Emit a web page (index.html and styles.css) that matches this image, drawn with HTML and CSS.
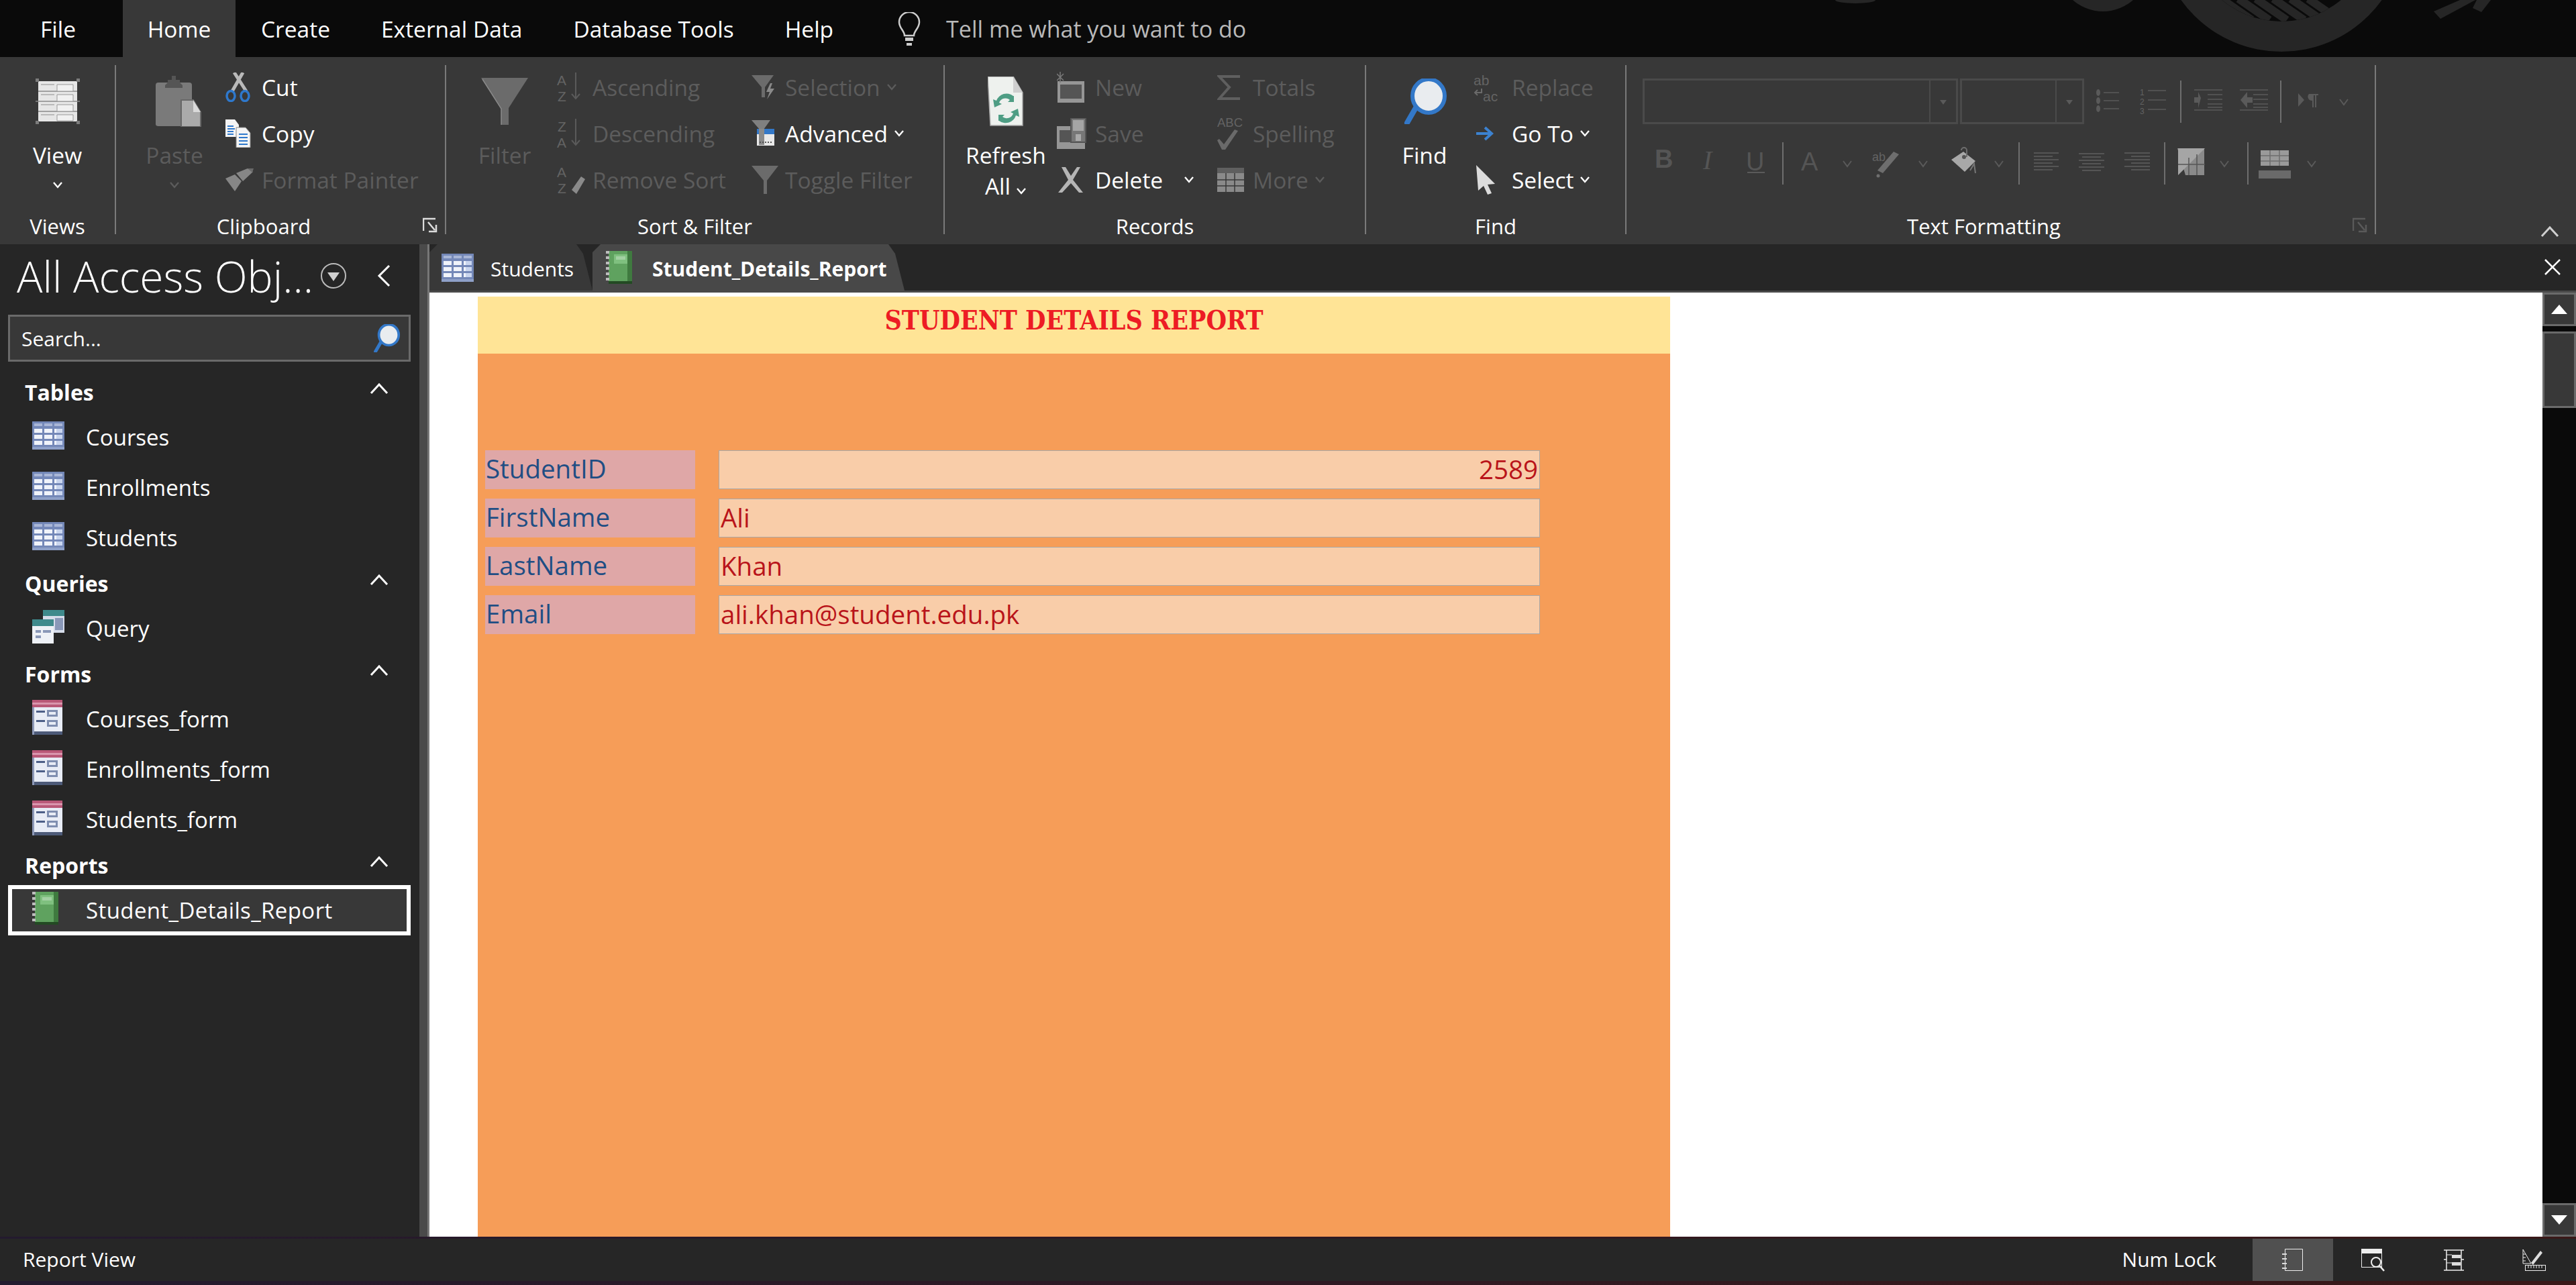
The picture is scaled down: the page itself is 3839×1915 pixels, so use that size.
FILE: index.html
```html
<!DOCTYPE html>
<html lang="en">
<head>
  <meta charset="UTF-8">
  <title>Student_Details_Report</title>
  <link rel="stylesheet" href="styles.css">
</head>
<body>
  <svg class="defs" width="0" height="0">
    <symbol id="chev" viewBox="0 0 16 11"><path d="M2 2l6 7 6-7" fill="none" stroke="currentColor" stroke-width="2.4"/></symbol>
    <symbol id="up" viewBox="0 0 28 18"><path d="M2 16L14 3l12 13" fill="none" stroke="currentColor" stroke-width="3"/></symbol>
    <symbol id="tbl" viewBox="0 0 48 42">
      <rect width="48" height="42" fill="#7488b8"/><rect y="38" width="48" height="4" fill="#8ea0c8"/>
      <path d="M3 3h12v4H3zM18 3h12v4H18zM33 3h12v4H33z" fill="#a9b6d6"/>
      <path d="M3 11h12v6H3zM18 11h12v6H18zM33 11h12v6H33zM3 20h12v6H3zM18 20h12v6H18zM33 20h12v6H33zM3 29h12v6H3zM18 29h12v6H18zM33 29h12v6H33z" fill="#f0f3fa"/>
      <path d="M36 11h9v6h-9zM36 20h9v6h-9zM36 29h9v6h-9z" fill="#c9d5ee"/>
    </symbol>
    <symbol id="frm" viewBox="0 0 45 52" preserveAspectRatio="xMinYMid">
      <rect width="45" height="52" fill="#e8ecf6"/><rect width="45" height="11" fill="#b95878"/><rect y="4" width="45" height="3" fill="#d995ad"/>
      <rect y="47" width="45" height="5" fill="#4d5a78"/><rect width="3" height="52" y="11" fill="#8d99b8"/>
      <path d="M6 16h13v3H6zM6 30h13v3H6z" fill="#4d5f88"/>
      <rect x="22" y="15" width="16" height="10" fill="#7f8eb0"/><rect x="25" y="18" width="10" height="4" fill="#e8ecf6"/>
      <rect x="22" y="30" width="16" height="10" fill="#7f8eb0"/><rect x="25" y="33" width="10" height="4" fill="#e8ecf6"/>
    </symbol>
    <symbol id="rpt" viewBox="0 0 39 49" preserveAspectRatio="xMinYMid">
      <rect x="4" width="35" height="49" fill="#5fa25f"/><rect x="32" width="7" height="49" fill="#3f7a3f"/><rect x="4" y="45" width="35" height="4" fill="#234a23"/>
      <rect x="12" y="5" width="20" height="14" fill="#7fc07f"/><rect x="15" y="8" width="14" height="5" fill="#a3d0a3"/>
      <path d="M0 0h5v4H0zM0 8h5v4H0zM0 16h5v4H0zM0 24h5v4H0zM0 32h5v4H0zM0 40h5v4H0z" fill="#bdbdbd"/>
    </symbol>
    <symbol id="mag" viewBox="0 0 65 68">
      <path d="M6 66L21 40" stroke="#3378c8" stroke-width="8" stroke-linecap="round"/>
      <ellipse cx="38" cy="26" rx="24" ry="25" fill="#e9ecef" stroke="#3378c8" stroke-width="6"/>
    </symbol>
  </svg>

  <header class="titlebar">
    <svg class="ornament" width="3839" height="85" viewBox="0 0 3839 85">
      <defs><clipPath id="hole"><circle cx="3400" cy="-107" r="139"/></clipPath></defs>
      <path d="M3216 -107a184 184 0 1 0 368 0a184 184 0 1 0 -368 0zM3261 -107a139 139 0 1 1 278 0a139 139 0 1 1 -278 0z" fill="#262626" fill-rule="evenodd"/>
      <g clip-path="url(#hole)" stroke="#262626" stroke-width="12">
        <path d="M3310 -2l46 32M3336 -2l46 32M3362 -2l46 32M3388 -2l46 32M3414 -2l46 32M3440 -2l46 32"/>
      </g>
      <circle cx="3134" cy="-51" r="68" fill="#262626"/>
      <ellipse cx="2765" cy="0" rx="30" ry="5" fill="#262626"/>
      <path d="M3627 17l10 11 52-28h-23zM3685 12l13 6 14-18h-21z" fill="#262626"/>
    </svg>
    <nav class="tabs">
      <a class="tab tab-file">File</a>
      <a class="tab tab-on">Home</a>
      <a class="tab">Create</a>
      <a class="tab">External Data</a>
      <a class="tab">Database Tools</a>
      <a class="tab">Help</a>
      <div class="tellme">
        <svg width="34" height="50" viewBox="0 0 34 50"><path d="M10 35c0-7-8-11-8-20a15 15 0 0 1 30 0c0 9-8 13-8 20z" fill="none" stroke="#ccc" stroke-width="2.5"/><path d="M11 38h12v5H11zM13 46h8v4h-8z" fill="#ccc"/></svg>
        <span>Tell me what you want to do</span>
      </div>
    </nav>
  </header>

  <section class="ribbon">
    <div class="group g-views">
      <div class="group-body">
        <div class="big">
          <div class="big-icon">
            <svg width="66" height="68" viewBox="0 0 66 68">
              <rect x="4" y="4" width="58" height="60" fill="#e6e6e6"/>
              <path d="M0 0h5v5H0zM61 0h5v5h-5zM0 63h5v5H0zM61 63h5v5h-5z" fill="#7d7d7d"/>
              <path d="M0 34h66M4 19h58M4 49h58" stroke="#8a8a8a" stroke-width="1.5"/>
              <path d="M32 9h24v10H32zM32 24h24v10H32zM32 39h24v10H32zM32 54h24v9H32z" fill="#f1f1f1" stroke="#999"/>
              <path d="M8 9h20M8 24h20M8 39h20M8 54h20" stroke="#aaa" stroke-width="1.5"/>
            </svg>
          </div>
          <span>View</span>
          <svg class="ico-chev" width="16" height="11"><use href="#chev"/></svg>
        </div>
      </div>
      <div class="group-label">Views</div>
    </div>

    <div class="group g-clip">
      <div class="group-body">
        <div class="big w120 off">
          <div class="big-icon">
            <svg class="shift" width="68" height="76" viewBox="0 0 68 76">
              <path d="M0 14q0-4 4-4h46q4 0 4 4v58q0 3-4 3H4q-4 0-4-3z" fill="#7a7a7a"/>
              <path d="M18 10V6h6V0h6v6h6v4l4 4v4H14v-4z" fill="#555"/>
              <path d="M38 36h18l11 18v22H38z" fill="#ababab" stroke="#686868" stroke-width="2"/>
              <path d="M56 36v18h11z" fill="#dadada"/>
            </svg>
          </div>
          <span>Paste</span>
          <svg class="ico-chev" width="16" height="11"><use href="#chev"/></svg>
        </div>
        <div class="col">
          <div class="row on">
            <div class="ri r54">
              <svg width="38" height="44" viewBox="0 0 38 44"><path d="M13 0l18 28M26 0L10 28" stroke="#b9b9b9" stroke-width="5"/><ellipse cx="8" cy="35" rx="6" ry="7.5" fill="none" stroke="#2e78cc" stroke-width="3.5"/><ellipse cx="29" cy="35" rx="6" ry="7.5" fill="none" stroke="#2e78cc" stroke-width="3.5"/></svg>
            </div>
            <span>Cut</span>
          </div>
          <div class="row on">
            <div class="ri r54">
              <svg width="38" height="42" viewBox="0 0 38 42"><path d="M0 0h14l6 8v18H0z" fill="#f4f4f4"/><path d="M16 12h14l7 8v22H16z" fill="#f4f4f4" stroke="#888"/><path d="M3 10h9M3 14h11M3 18h9M3 22h9M20 22h13M20 27h13M20 32h13M20 37h13" stroke="#2e78cc" stroke-width="2"/></svg>
            </div>
            <span>Copy</span>
          </div>
          <div class="row off">
            <div class="ri r54">
              <svg width="42" height="34" viewBox="0 0 42 34"><path d="M0 15l14-6 10 10-10 15zM16 7l17-7 8 5-15 14z" fill="#868686"/><path d="M33 0l9 0-2 6z" fill="#6a6a6a"/></svg>
            </div>
            <span>Format Painter</span>
          </div>
        </div>
      </div>
      <div class="group-label has-launcher">Clipboard</div>
      <svg class="launcher" width="25" height="24" viewBox="0 0 25 24"><path d="M1 20V2h18" fill="none" stroke="currentColor" stroke-width="2.5"/><path d="M8 7l10 12M20 11v10H9" fill="none" stroke="currentColor" stroke-width="2.5"/></svg>
    </div>

    <div class="group g-sort">
      <div class="group-body">
        <div class="big w140 off">
          <div class="big-icon">
            <svg width="70" height="70" viewBox="0 0 70 70"><path d="M0 0h70L41 45v25H30V45z" fill="#6b6b6b"/><path d="M2 2l28 44v24" fill="none" stroke="#8a8a8a" stroke-width="1.5"/></svg>
          </div>
          <span>Filter</span>
        </div>
        <div class="col w290">
          <div class="row off">
            <div class="ri r53">
              <svg width="36" height="60" viewBox="0 -8 36 60"><text class="mini"><tspan x="0" y="19">A</tspan><tspan x="1" y="43">Z</tspan></text><path d="M28 0v38M22 32l6 7 6-7" fill="none" stroke="#5a5a5a" stroke-width="2"/></svg>
            </div>
            <span>Ascending</span>
          </div>
          <div class="row off">
            <div class="ri r53">
              <svg width="36" height="60" viewBox="0 -8 36 60"><text class="mini"><tspan x="1" y="19">Z</tspan><tspan x="0" y="43">A</tspan></text><path d="M28 0v38M22 32l6 7 6-7" fill="none" stroke="#5a5a5a" stroke-width="2"/></svg>
            </div>
            <span>Descending</span>
          </div>
          <div class="row off">
            <div class="ri r53">
              <svg width="42" height="60" viewBox="0 -7 42 60"><text class="mini"><tspan x="0" y="19">A</tspan><tspan x="1" y="43">Z</tspan></text><path d="M22 38l14-20 6 4-13 22z" fill="#8a8a8a"/></svg>
            </div>
            <span>Remove Sort</span>
          </div>
        </div>
        <div class="col">
          <div class="row off">
            <div class="ri r50">
              <svg width="36" height="36" viewBox="0 0 36 36"><path d="M0 0h33L20 18v15h-5V18z" fill="#6b6b6b"/><path d="M28 12l-6 13h5l-4 11 11-16h-6l3-8z" fill="#8a8a8a"/></svg>
            </div>
            <span>Selection</span>
            <svg class="ico-chev small" width="16" height="11"><use href="#chev"/></svg>
          </div>
          <div class="row on">
            <div class="ri r50">
              <svg width="36" height="40" viewBox="0 0 36 40"><path d="M0 0h28L18 14v22h-6V14z" fill="#808080"/><rect x="8" y="13" width="26" height="25" fill="#e9e9e9"/><rect x="8" y="13" width="26" height="8" fill="#3378c8"/><rect x="11" y="13" width="8" height="24" fill="#8a8a8a"/><path d="M12 33h20" stroke="#555" stroke-width="2" stroke-dasharray="2 2"/></svg>
            </div>
            <span>Advanced</span>
            <svg class="ico-chev small" width="16" height="11"><use href="#chev"/></svg>
          </div>
          <div class="row off">
            <div class="ri r50">
              <svg width="42" height="42" viewBox="0 0 42 42"><path d="M0 0h40L23 22v20h-5V22z" fill="#6b6b6b"/></svg>
            </div>
            <span>Toggle Filter</span>
          </div>
        </div>
      </div>
      <div class="group-label">Sort &amp; Filter</div>
    </div>

    <div class="group g-rec">
      <div class="group-body">
        <div class="big w130">
          <div class="big-icon">
            <svg width="54" height="74" viewBox="0 0 54 74">
              <path d="M0 0h38l14 24v49H4z" fill="#eef1ee" stroke="#a8a8a8" stroke-width="1.5"/><path d="M38 0v24h14z" fill="#cfcfcf"/>
              <path d="M38 29a16 16 0 0 0-25 7l-5-2 2 12 11-5-4-2a10 10 0 0 1 16-4l-3 3h9V29z" fill="#4e9d84"/>
              <path d="M17 66a16 16 0 0 0 25-8l5 2-2-12-11 5 4 2a10 10 0 0 1-16 5l3-3h-9v9z" fill="#4e9d84"/>
            </svg>
          </div>
          <span>Refresh</span>
          <span class="chev-line">All<svg class="ico-chev tight" width="16" height="11"><use href="#chev"/></svg></span>
        </div>
        <div class="col w239">
          <div class="row off">
            <div class="ri r57">
              <svg width="42" height="48" viewBox="0 0 42 48"><rect x="1" y="15" width="40" height="32" fill="#969696"/><rect x="5" y="20" width="32" height="21" fill="#555"/><path d="M5 1v16M0 4l10 10M10 4L0 14" stroke="#7a7a7a" stroke-width="1.5"/></svg>
            </div>
            <span>New</span>
          </div>
          <div class="row off">
            <div class="ri r57">
              <svg width="44" height="46" viewBox="0 0 44 46"><rect y="12" width="42" height="34" fill="#969696"/><rect x="4" y="18" width="26" height="18" fill="#555"/><rect x="21" y="0" width="22" height="36" fill="#777" stroke="#555" stroke-width="2"/><rect x="24" y="3" width="16" height="16" fill="#a5a5a5"/><rect x="28" y="24" width="8" height="10" fill="#aaa"/></svg>
            </div>
            <span>Save</span>
          </div>
          <div class="row on">
            <div class="ri r57">
              <svg width="42" height="38" viewBox="0 0 42 38"><path d="M7 0h6l8 13 9-13h5L24 19l15 19h-6L21 24 8 38H2l15-19z" fill="#b5b5b5"/></svg>
            </div>
            <span>Delete</span>
            <svg class="ico-chev delete" width="16" height="11"><use href="#chev"/></svg>
          </div>
        </div>
        <div class="col">
          <div class="row off">
            <div class="ri r53">
              <svg width="38" height="40" viewBox="0 0 38 40"><path d="M34 4H3l15 16L3 37h31" fill="none" stroke="#5f5f5f" stroke-width="4"/></svg>
            </div>
            <span>Totals</span>
          </div>
          <div class="row off">
            <div class="ri r53">
              <svg width="40" height="62" viewBox="0 -6 40 62"><text x="0" y="15" class="mini sm" textLength="38" lengthAdjust="spacingAndGlyphs">ABC</text><path d="M3 33l7 8 16-22 5 2-19 28h-5L0 35z" fill="#6a6a6a"/></svg>
            </div>
            <span>Spelling</span>
          </div>
          <div class="row off">
            <div class="ri r53">
              <svg width="40" height="36" viewBox="0 0 40 36"><rect width="40" height="36" fill="#8a8a8a"/><rect width="40" height="8" fill="#5f5f5f"/><path d="M13 8v28M26 8v28M0 18h40M0 27h40" stroke="#383838" stroke-width="1.5"/></svg>
            </div>
            <span>More</span>
            <svg class="ico-chev small" width="16" height="11"><use href="#chev"/></svg>
          </div>
        </div>
      </div>
      <div class="group-label">Records</div>
    </div>

    <div class="group g-find">
      <div class="group-body">
        <div class="big w120">
          <div class="big-icon"><svg width="65" height="68"><use href="#mag"/></svg></div>
          <span>Find</span>
        </div>
        <div class="col">
          <div class="row off">
            <div class="ri r57">
              <svg width="44" height="60" viewBox="0 -8 44 60"><text class="mini"><tspan x="0" y="19">ab</tspan><tspan x="14" y="43">ac</tspan></text><path d="M12 24v6H2M6 26l-4 4 4 4" fill="none" stroke="#6a6a6a" stroke-width="2"/></svg>
            </div>
            <span>Replace</span>
          </div>
          <div class="row on">
            <div class="ri r57">
              <svg class="goto" width="26" height="22" viewBox="0 0 26 22"><path d="M0 11h22M13 2l10 9-10 9" fill="none" stroke="#3c82d0" stroke-width="4"/></svg>
            </div>
            <span>Go To</span>
            <svg class="ico-chev small" width="16" height="11"><use href="#chev"/></svg>
          </div>
          <div class="row on">
            <div class="ri r57">
              <svg class="goto" width="28" height="44" viewBox="0 0 28 44"><path d="M0 0l28 28-11 1 6 13-6 2-6-13-8 7z" fill="#dcdcdc"/></svg>
            </div>
            <span>Select</span>
            <svg class="ico-chev small" width="16" height="11"><use href="#chev"/></svg>
          </div>
        </div>
      </div>
      <div class="group-label">Find</div>
    </div>

    <div class="group g-text">
      <div class="tf-rows">
        <div class="tf-top">
          <div class="combo c470"><i></i></div>
          <div class="combo c185"><i></i></div>
          <svg width="400" height="68" viewBox="3106 117 400 68">
            <g fill="#5a5a5a">
              <ellipse cx="3127" cy="138" rx="3" ry="5"/><ellipse cx="3127" cy="150" rx="3" ry="5"/><ellipse cx="3127" cy="162" rx="3" ry="5"/>
              <text class="mini nums"><tspan x="3189" y="142">1</tspan><tspan x="3189" y="156">2</tspan><tspan x="3189" y="170">3</tspan></text>
              <path d="M3289 146l-4-9v8h-6v8h6v8z" transform="translate(-9 0) scale(1 1)"/>
              <path d="M3339 149l10-12v8h8v8h-8v8z"/>
              <path d="M3425 139l9 10-9 10z"/><path d="M3441 140h14v2h-3v18h-2v-18h-2v18h-2v-10a6 6 0 0 1-5-10z"/>
            </g>
            <path d="M3135 138h23M3135 150h23M3135 162h23M3201 135h27M3201 149h27M3201 163h27M3270 134h42M3290 141h22M3290 148h22M3290 155h22M3290 160h22M3270 164h42M3338 134h42M3358 141h22M3358 148h22M3358 155h22M3358 160h22M3338 164h42" stroke="#5a5a5a" stroke-width="1.5"/>
            <path d="M3250 120v63M3399 120v63" stroke="#6e6e6e" stroke-width="2"/>
            <path d="M3487 148l6 8 6-8" fill="none" stroke="#5a5a5a" stroke-width="2"/>
          </svg>
        </div>
        <svg class="tf-bottom" width="1040" height="68" viewBox="2448 209 1040 68">
          <text x="2466" y="250" class="tf-b">B</text>
          <text x="2538" y="252" class="tf-i">I</text>
          <text x="2602" y="254" class="tf-u">U</text>
          <path d="M2604 257h26" stroke="#5a5a5a" stroke-width="2"/>
          <text x="2684" y="254" class="tf-a">A</text>
          <text x="2790" y="240" class="mini sm">ab</text>
          <path d="M2798 254l24-28 8 4-24 28z" fill="#6e6e6e"/><circle cx="2799" cy="262" r="2.5" fill="#6e6e6e"/>
          <path d="M2926 226l18 14-16 16-20-18z" fill="#a8a8a8"/><path d="M2923 224a4 4 0 0 1 8 0v10" fill="none" stroke="#6e6e6e" stroke-width="2"/><circle cx="2927" cy="234" r="3" fill="#555"/><path d="M2936 254l6-10 2 14" fill="none" stroke="#777" stroke-width="2"/>
          <path d="M2747 240l6 8 6-8M2860 240l6 8 6-8M2973 240l6 8 6-8M3309 240l6 8 6-8M3439 240l6 8 6-8" fill="none" stroke="#5a5a5a" stroke-width="2"/>
          <path d="M2657 212v63M3009 212v63M3226 212v63M3350 212v63" stroke="#6e6e6e" stroke-width="2"/>
          <path d="M3031 228h37M3031 233h28M3031 238h37M3031 243h28M3031 248h37M3031 253h28M3098 229h38M3103 234h28M3098 239h38M3103 244h28M3098 249h38M3103 254h28M3166 228h38M3176 233h28M3166 238h38M3176 243h28M3166 248h38M3176 253h28" stroke="#5f5f5f" stroke-width="1.5"/>
          <path d="M3245 221h40v40h-28z" fill="#8a8a8a"/><path d="M3246 221h40l-40 40z" fill="#a5a5a5"/><path d="M3262 235v26M3274 230v31M3246 245h40" stroke="#555" stroke-width="1.5"/>
          <rect x="3369" y="224" width="42" height="23" fill="#9a9a9a"/><path d="M3383 224v23M3397 224v23M3369 232h42M3369 240h42" stroke="#6e6e6e" stroke-width="1.5"/>
          <rect x="3366" y="254" width="48" height="12" fill="#6a6a6a"/>
        </svg>
      </div>
      <div class="group-label has-launcher">Text Formatting</div>
      <svg class="launcher dim" width="25" height="24" viewBox="0 0 25 24"><path d="M1 20V2h18" fill="none" stroke="currentColor" stroke-width="2.5"/><path d="M8 7l10 12M20 11v10H9" fill="none" stroke="currentColor" stroke-width="2.5"/></svg>
    </div>
    <svg class="collapse" width="28" height="18"><use href="#up"/></svg>
  </section>

  <main class="main">
    <aside class="navpane">
      <div class="nav-head">
        <span class="nav-title">All Access Obj...</span>
        <svg width="40" height="40" viewBox="0 0 40 40"><circle cx="20" cy="20" r="18" fill="none" stroke="#bbb" stroke-width="2"/><path d="M11 15h18l-9 13z" fill="#d0d0d0"/></svg>
        <svg class="nav-back" width="22" height="34" viewBox="0 0 22 34"><path d="M19 2L4 17l15 15" fill="none" stroke="#fff" stroke-width="3"/></svg>
      </div>
      <div class="searchbox">
        <span>Search...</span>
        <svg width="42" height="42"><use href="#mag"/></svg>
      </div>

      <div class="nav-sec"><span>Tables</span><svg width="28" height="18"><use href="#up"/></svg></div>
      <div class="nav-item"><svg width="48" height="42"><use href="#tbl"/></svg><span>Courses</span></div>
      <div class="nav-item"><svg width="48" height="42"><use href="#tbl"/></svg><span>Enrollments</span></div>
      <div class="nav-item"><svg width="48" height="42"><use href="#tbl"/></svg><span>Students</span></div>

      <div class="nav-sec"><span>Queries</span><svg width="28" height="18"><use href="#up"/></svg></div>
      <div class="nav-item">
        <svg width="48" height="50" viewBox="0 0 48 50"><rect x="16" width="32" height="34" fill="#d6dcea"/><rect x="16" width="32" height="9" fill="#3f8a8c"/><rect x="34" y="12" width="12" height="18" fill="#8a98b8"/><rect y="14" width="32" height="36" fill="#eef1f6"/><rect y="14" width="32" height="10" fill="#3f8a8c"/><path d="M5 30h8v4H5zM5 38h8v4H5zM16 30h12v4H16z" fill="#8a98b8"/></svg>
        <span>Query</span>
      </div>

      <div class="nav-sec"><span>Forms</span><svg width="28" height="18"><use href="#up"/></svg></div>
      <div class="nav-item"><svg width="45" height="52"><use href="#frm"/></svg><span>Courses_form</span></div>
      <div class="nav-item"><svg width="45" height="52"><use href="#frm"/></svg><span>Enrollments_form</span></div>
      <div class="nav-item"><svg width="45" height="52"><use href="#frm"/></svg><span>Students_form</span></div>

      <div class="nav-sec"><span>Reports</span><svg width="28" height="18"><use href="#up"/></svg></div>
      <div class="nav-item nav-sel"><svg width="39" height="49"><use href="#rpt"/></svg><span>Student_Details_Report</span></div>
    </aside>
    <div class="splitter"></div>

    <section class="work">
      <div class="doc-tabs">
        <div class="doc-tab"><svg width="48" height="42"><use href="#tbl"/></svg><span>Students</span></div>
        <div class="doc-tab doc-on"><svg width="39" height="49"><use href="#rpt"/></svg><span>Student_Details_Report</span></div>
        <svg class="doc-close" width="26" height="26" viewBox="0 0 26 26"><path d="M2 2l22 22M24 2L2 24" stroke="#fff" stroke-width="2.5"/></svg>
      </div>
      <div class="doc-body">
        <div class="report-view">
          <div class="report">
            <div class="report-head">STUDENT DETAILS REPORT</div>
            <div class="report-detail">
              <div class="rp-row"><div class="rp-label">StudentID</div><div class="rp-field num">2589</div></div>
              <div class="rp-row"><div class="rp-label">FirstName</div><div class="rp-field">Ali</div></div>
              <div class="rp-row"><div class="rp-label">LastName</div><div class="rp-field">Khan</div></div>
              <div class="rp-row"><div class="rp-label">Email</div><div class="rp-field">ali.khan@student.edu.pk</div></div>
            </div>
          </div>
        </div>
        <div class="vscroll">
          <div class="sb-btn"><i class="tri-up"></i></div>
          <div class="sb-thumb"></div>
          <div class="sb-track"></div>
          <div class="sb-btn"><i class="tri-down"></i></div>
        </div>
      </div>
    </section>
  </main>

  <footer class="status">
    <span class="st-text">Report View</span>
    <span class="st-lock">Num Lock</span>
    <div class="st-btn st-on">
      <svg width="32" height="34" viewBox="0 0 32 34"><path d="M5.500.5h26v32h-26z" transform="translate(-1 0)" fill="none" stroke="#eee"/><path d="M0 7h7v2H0zM0 14h7v2H0zM0 21h7v2H0zM0 28h7v2H0z" fill="#ddd"/></svg>
    </div>
    <div class="st-btn">
      <svg width="36" height="34" viewBox="0 0 36 34"><rect x=".5" y=".5" width="30" height="27" fill="none" stroke="#eee"/><rect width="31" height="7" fill="#eee"/><circle cx="22" cy="20" r="7" fill="#262626" stroke="#eee" stroke-width="2"/><path d="M27 25l7 8" stroke="#eee" stroke-width="2.500"/></svg>
    </div>
    <div class="st-btn">
      <svg width="30" height="32" viewBox="0 0 30 32"><path d="M4 1v30M26 1v30M0 1h30M0 31h30M0 15h4M26 15h4" fill="none" stroke="#eee" stroke-width="1.500"/><path d="M12 8h13v5H12zM12 19h13v5H12z" fill="#ddd"/><path d="M4 8h8M4 20h8" stroke="#eee"/></svg>
    </div>
    <div class="st-btn">
      <svg width="36" height="34" viewBox="0 0 36 34"><path d="M1 1v21h12L1 1zM1 8h4M1 13h4M1 18h4" fill="none" stroke="#eee"/><path d="M13 21L27 3l3 3-14 18z" fill="#ddd"/><rect x="4.500" y="24.500" width="30" height="8" fill="none" stroke="#eee"/><path d="M9 25v4M13 25v4M17 25v4M21 25v4M25 25v4M29 25v4" stroke="#eee"/></svg>
    </div>
  </footer>
</body>
</html>
```

FILE: styles.css
```css
* {
  box-sizing: border-box;
}
html, body {
  margin: 0;
  height: 100%;
}
body {
  width: 3839px;
  height: 1915px;
  overflow: hidden;
  display: flex;
  flex-direction: column;
  background: #262626;
  color: #fff;
  font-family: "Open Sans", "Noto Sans", Arial, sans-serif;
  font-size: 33.5px;
}
.defs {
  position: absolute;
}

/* title bar */
.titlebar {
  position: relative;
  height: 85px;
  flex: none;
  background: #0a0a0a;
}
.ornament {
  position: absolute;
  left: 0;
  top: 0;
}
.tabs {
  position: relative;
  display: flex;
  height: 85px;
  align-items: stretch;
}
.tab {
  display: flex;
  align-items: center;
  padding: 0 38px;
  font-size: 33.5px;
  white-space: nowrap;
}
.tab-file {
  width: 183px;
  padding: 0 0 0 60px;
}
.tab-on {
  width: 168px;
  padding: 0;
  justify-content: center;
  background: #383838;
}
.tellme {
  display: flex;
  align-items: center;
  gap: 38px;
  margin-left: 58px;
  color: #b9b9b9;
  font-size: 34px;
}

/* ribbon */
.ribbon {
  height: 279px;
  flex: none;
  display: flex;
  padding-top: 12px;
  background: #383838;
}
.group {
  position: relative;
  display: flex;
  flex-direction: column;
  height: 252px;
  border-right: 2px solid #7a7a7a;
}
.g-views { width: 173px; }
.g-clip { width: 492px; }
.g-sort { width: 743px; }
.g-rec { width: 628px; }
.g-find { width: 388px; }
.g-text { width: 1117px; }
.group-body {
  flex: 1;
  display: flex;
  min-height: 0;
}
.g-clip .group-body { padding-left: 27px; }
.g-sort .group-body { padding-left: 17px; }
.g-rec .group-body { padding-left: 26px; }
.g-find .group-body { padding-left: 27px; }
.group-label {
  height: 33px;
  line-height: 42px;
  text-align: center;
  font-size: 31px;
  white-space: nowrap;
}
.group-label.has-launcher {
  padding-right: 50px;
}
.launcher {
  position: absolute;
  right: 8px;
  bottom: 1px;
  color: #dcdcdc;
}
.launcher.dim {
  color: #5a5a5a;
}
.big {
  width: 100%;
  display: flex;
  flex-direction: column;
  align-items: center;
  line-height: 46px;
  white-space: nowrap;
}
.w120 { width: 120px; flex: none; }
.w130 { width: 130px; flex: none; }
.w140 { width: 140px; flex: none; }
.big-icon {
  height: 111px;
  flex: none;
  display: flex;
  align-items: center;
  justify-content: center;
  padding-bottom: 4px;
}
.shift {
  margin-left: 12px;
}
.ico-chev {
  margin-top: 16px;
  color: #fff;
  flex: none;
}
.ico-chev.small {
  margin: 0 0 0 9px;
}
.ico-chev.tight {
  margin: 0 0 0 8px;
}
.ico-chev.delete {
  margin: 0 0 0 31px;
}
.chev-line {
  display: block;
}
.off {
  color: #5c5c5c;
}
.off .ico-chev {
  color: #5c5c5c;
}
.col {
  display: flex;
  flex-direction: column;
  margin: -2px 0 0 16px;
  flex: none;
}
.g-sort .col { margin-left: 8px; }
.g-sort .col + .col { margin-left: 0; }
.g-rec .col { margin-left: 11px; }
.g-rec .col + .col { margin-left: 0; }
.g-find .col { margin-left: 13px; }
.w290 { width: 290px; }
.w239 { width: 239px; }
.row {
  display: flex;
  align-items: center;
  height: 69px;
  white-space: nowrap;
}
.ri {
  flex: none;
  display: flex;
  align-items: center;
  height: 69px;
}
.r50 { width: 50px; }
.r53 { width: 53px; }
.r54 { width: 54px; }
.r57 { width: 57px; }
.goto {
  margin-left: 4px;
}
.mini {
  font-family: "Liberation Sans", sans-serif;
  font-size: 21px;
  fill: #636363;
}
.mini.sm {
  font-size: 18px;
}
.mini.nums {
  font-size: 12px;
}
.tf-rows {
  flex: 1;
  padding: 20px 0 0 24px;
}
.tf-top {
  display: flex;
}
.tf-bottom {
  display: block;
  margin-top: 24px;
}
.tf-b, .tf-i, .tf-u, .tf-a {
  font-family: "Liberation Serif", serif;
  font-size: 40px;
  fill: #555;
}
.tf-b { font-family: "Liberation Sans", sans-serif; font-weight: 700; font-size: 38px; }
.tf-i { font-style: italic; }
.tf-u, .tf-a { font-family: "Liberation Sans", sans-serif; font-size: 38px; }
.combo {
  display: flex;
  justify-content: flex-end;
  height: 68px;
  border: 3px solid #4a4a4a;
  flex: none;
}
.combo i {
  width: 40px;
  border-left: 2px solid #4a4a4a;
  position: relative;
}
.combo i::after {
  content: "";
  position: absolute;
  left: 14px;
  top: 29px;
  border: 5px solid transparent;
  border-top: 7px solid #5a5a5a;
}
.c470 { width: 470px; margin-right: 3px; }
.c185 { width: 185px; }
.collapse {
  margin: 239px 0 0 245px;
  color: #cfcfcf;
}

/* navigation pane */
.main {
  flex: 1;
  display: flex;
  min-height: 0;
}
.navpane {
  width: 625px;
  flex: none;
  padding: 0 13px 0 12px;
  background: #262626;
  font-size: 33px;
}
.nav-head {
  display: flex;
  align-items: center;
  height: 92px;
  padding: 2px 0 0 13px;
  margin-bottom: 13px;
}
.nav-title {
  width: 452px;
  font-size: 64px;
  font-weight: 300;
  white-space: nowrap;
}
.nav-back {
  margin-left: 44px;
}
.searchbox {
  display: flex;
  align-items: center;
  justify-content: space-between;
  height: 70px;
  margin-bottom: 15px;
  padding: 0 12px 0 17px;
  border: 3px solid #6a6a6a;
  background: #383838;
  font-size: 30px;
}
.nav-sec {
  display: flex;
  align-items: center;
  justify-content: space-between;
  height: 60px;
  padding: 0 33px 0 25px;
  font-weight: 700;
  font-size: 32px;
}
.nav-sec svg {
  margin-bottom: 10px;
  color: #fff;
}
.nav-item {
  display: flex;
  align-items: center;
  height: 75px;
  padding-left: 36px;
}
.nav-item span {
  margin-left: 32px;
}
.nav-item svg {
  width: 48px;
  margin-bottom: 6px;
  flex: none;
}
.nav-sel {
  border: 6px solid #fff;
  padding-left: 30px;
  background: #383838;
  letter-spacing: .4px;
}
.splitter {
  width: 15px;
  flex: none;
  background: #4a4a4a;
  border-right: 3px solid #777;
}

/* document area */
.work {
  flex: 1;
  min-width: 0;
  display: flex;
  flex-direction: column;
}
.doc-tabs {
  display: flex;
  align-items: stretch;
  height: 72px;
  flex: none;
  border-bottom: 3px solid #4a4a4a;
  background: #262626;
}
.doc-tab {
  display: flex;
  align-items: center;
  width: 243px;
  padding: 0 0 0 18px;
  gap: 25px;
  background: #383838;
  font-size: 30px;
  clip-path: polygon(0 12px, 12px 0, calc(100% - 24px) 0, calc(100% - 14px) 14px, 100% 100%, 0 100%);
}
.doc-tab span {
  margin-top: 3px;
}
.doc-on {
  width: 465px;
  margin-left: 0;
  padding-left: 20px;
  gap: 30px;
  background: #484848;
  font-weight: 700;
}
.doc-close {
  margin: 21px 22px 0 auto;
}
.doc-body {
  flex: 1;
  display: flex;
  min-height: 0;
}
.report-view {
  flex: 1;
  min-width: 0;
  overflow: hidden;
  padding: 6px 0 0 72px;
  background: #fff;
}
.report {
  width: 1777px;
  height: 100%;
  background: #f69d58;
}
.report-head {
  height: 85px;
  padding-top: 13px;
  background: #ffe496;
  color: #ed1c24;
  text-align: center;
  font-family: "DejaVu Serif", serif;
  font-stretch: condensed;
  font-size: 39px;
  font-weight: 700;
  line-height: 44px;
}
.report-detail {
  display: grid;
  row-gap: 14px;
  padding: 144px 0 0 11px;
}
.rp-row {
  display: grid;
  grid-template-columns: 313px 1224px;
  column-gap: 35px;
  height: 58px;
  font-size: 38.5px;
  line-height: 54px;
}
.rp-label {
  padding-left: 1px;
  background: #dfa7a7;
  color: #1f4e84;
}
.rp-field {
  padding: 0 2px 0 2px;
  border: 1px solid #a8a8a8;
  background: #f9cda9;
  color: #b9141a;
}
.rp-field.num {
  text-align: right;
}
.vscroll {
  width: 50px;
  flex: none;
  display: flex;
  flex-direction: column;
  background: #0a0a0a;
}
.sb-btn {
  height: 50px;
  flex: none;
  display: flex;
  align-items: center;
  justify-content: center;
  border: 3px solid #6a6a6a;
  background: #383838;
}
.sb-thumb {
  height: 114px;
  margin-top: 8px;
  flex: none;
  background: #383838;
  border: 3px solid #6a6a6a;
}
.sb-track {
  flex: 1;
}
.tri-up, .tri-down {
  width: 0;
  height: 0;
  border-left: 12px solid transparent;
  border-right: 12px solid transparent;
}
.tri-up { border-bottom: 14px solid #fff; }
.tri-down { border-top: 14px solid #fff; }

/* status bar */
.status {
  height: 72px;
  flex: none;
  display: flex;
  align-items: stretch;
  padding-left: 34px;
  border-top: 3px solid #4a4a4a;
  border-bottom: 6px solid;
  border-image: linear-gradient(90deg, #231a2e, #3a1818) 1;
  background: #262626;
  font-size: 30px;
  line-height: 62px;
}
.st-text {
  flex: 1;
}
.st-lock {
  margin-right: 54px;
}
.st-btn {
  width: 120px;
  display: flex;
  align-items: center;
  justify-content: center;
}
.st-on {
  background: #505050;
}
.st-btn:last-child {
  margin-right: 2px;
}
```
